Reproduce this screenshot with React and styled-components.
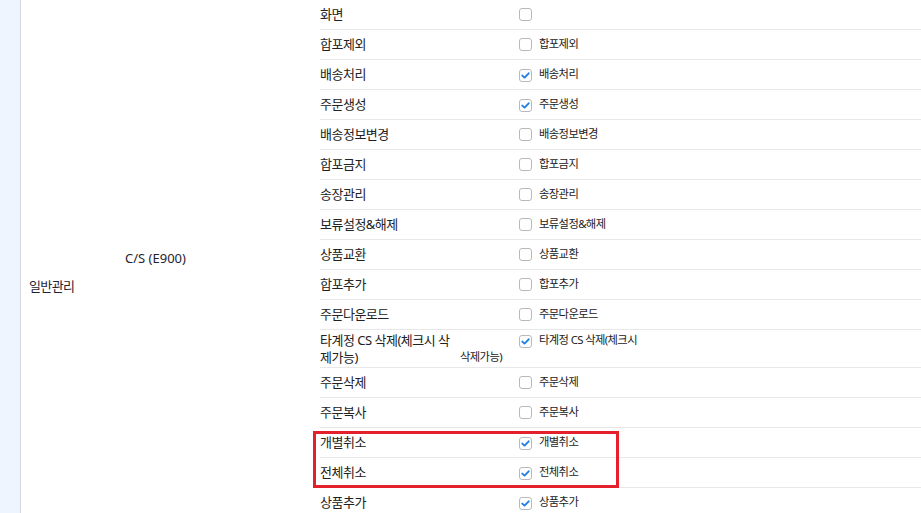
import React from "react";
import styled, { createGlobalStyle } from "styled-components";

const GlobalStyle = createGlobalStyle`
  html, body {
    margin: 0;
    padding: 0;
    background: #fff;
  }
  body {
    font-family: "Noto Sans", "Noto Sans CJK KR", sans-serif;
    color: #222;
  }
`;

// 권한 목록 (일반관리 > C/S)
const menus = [
  { name: "화면", checked: false, hideText: true },
  { name: "합포제외", checked: false },
  { name: "배송처리", checked: true },
  { name: "주문생성", checked: true },
  { name: "배송정보변경", checked: false },
  { name: "합포금지", checked: false },
  { name: "송장관리", checked: false },
  { name: "보류설정&해제", checked: false },
  { name: "상품교환", checked: false },
  { name: "합포추가", checked: false },
  { name: "주문다운로드", checked: false },
  {
    name: "타계정 CS 삭제(체크시 삭제가능)",
    lines: ["타계정 CS 삭제(체크시 삭", "제가능)"],
    label: "타계정 CS 삭제(체크시",
    rest: "삭제가능)",
    checked: true,
  },
  { name: "주문삭제", checked: false },
  { name: "주문복사", checked: false },
  { name: "개별취소", checked: true, mark: true },
  { name: "전체취소", checked: true, mark: true },
  { name: "상품추가", checked: true },
];

const CheckBox = ({ checked }) => (
  <Box>
    {checked && (
      <svg width="11" height="11" viewBox="0 0 11 11">
        <path
          d="M2.3 5.6 L4.5 7.6 L8.7 3.3"
          fill="none"
          stroke="#1e7fe3"
          strokeWidth="1.9"
          strokeLinecap="round"
          strokeLinejoin="round"
        />
      </svg>
    )}
  </Box>
);

const MenuRow = ({ item }) => (
  <Row>
    <Label>
      {item.lines
        ? item.lines.map((line, i) => (
            <React.Fragment key={line}>
              {i > 0 && <br />}
              {line}
            </React.Fragment>
          ))
        : item.name}
    </Label>
    <CheckCell>
      <CheckBox checked={item.checked} />
      {!item.hideText && <CheckText>{item.label || item.name}</CheckText>}
      {item.rest && (
        <>
          <br />
          <CheckText>{item.rest}</CheckText>
        </>
      )}
    </CheckCell>
  </Row>
);

const App = () => {
  const before = menus.filter((m) => !m.mark);
  const marked = menus.filter((m) => m.mark);
  const last = before.pop();

  return (
    <>
      <GlobalStyle />
      <Page>
        <Sidebar />
        <Category>일반관리</Category>
        <Group>C/S (E900)</Group>
        <Rows>
          {before.map((item) => (
            <MenuRow key={item.name} item={item} />
          ))}
          <Highlight>
            {marked.map((item) => (
              <MenuRow key={item.name} item={item} />
            ))}
          </Highlight>
          <MenuRow item={last} />
        </Rows>
      </Page>
    </>
  );
};
export default App;

const Page = styled.div`
  display: flex;
  width: 921px;
  height: 513px;
  overflow: hidden;
  font-size: 13px;
  line-height: 17px;
`;

const Sidebar = styled.div`
  width: 20px;
  flex-shrink: 0;
  background: #eef5fe;
  border-right: 1px solid #d4d8de;
`;

const Category = styled.div`
  width: 92px;
  flex-shrink: 0;
  padding: 278px 0 0 8px;
  box-sizing: border-box;
  letter-spacing: -0.6px;
  color: #1f2430;
`;

const Group = styled.div`
  width: 207px;
  flex-shrink: 0;
  padding: 250px 0 0 12px;
  box-sizing: border-box;
  color: #1f2430;
`;

const Rows = styled.div`
  flex: 1;
  display: flex;
  flex-direction: column;
`;

const Row = styled.div`
  display: flex;
  align-items: center;
  min-height: 30px;
  padding: 2px 0;
  box-sizing: border-box;
  border-bottom: 1px solid #e8e8e8;
  flex-shrink: 0;
`;

const Label = styled.div`
  width: 140px;
  flex-shrink: 0;
  letter-spacing: -0.5px;
  line-height: 16.5px;
  white-space: nowrap;
`;

const CheckCell = styled.div`
  flex: 1;
  font-size: 11.3px;
  line-height: 16.5px;
  white-space: nowrap;
`;

const Box = styled.span`
  display: inline-flex;
  align-items: center;
  justify-content: center;
  width: 13px;
  height: 13px;
  box-sizing: border-box;
  margin: 0 7px 0 59px;
  border: 1px solid #b9b9b9;
  border-radius: 3px;
  background: #fff;
  vertical-align: -3px;
`;

const CheckText = styled.span`
  letter-spacing: -0.6px;
`;

const Highlight = styled.div`
  position: relative;

  &::after {
    content: "";
    position: absolute;
    top: 3px;
    left: -7px;
    width: 306px;
    bottom: 0;
    box-sizing: border-box;
    border: 3px solid #e3202b;
    pointer-events: none;
  }
`;
